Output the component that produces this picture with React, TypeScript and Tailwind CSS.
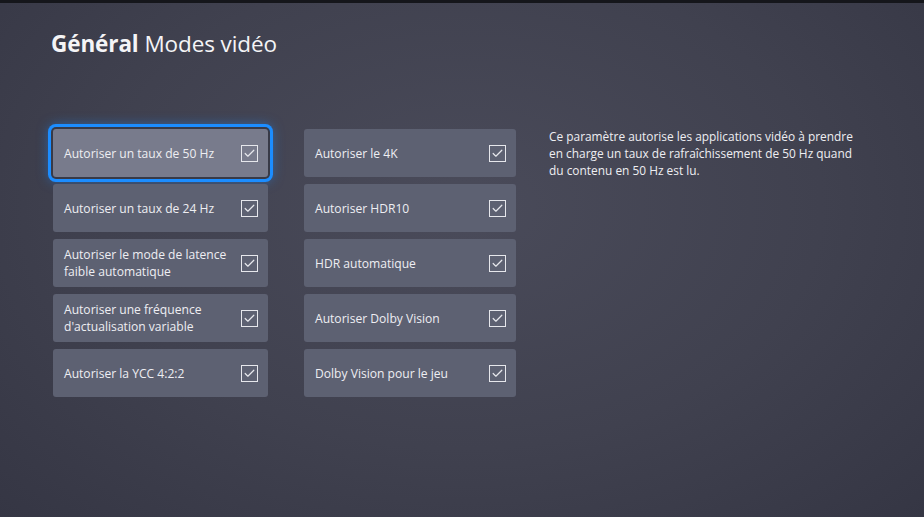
import { Check } from "lucide-react";

const left = [
  "Autoriser un taux de 50 Hz",
  "Autoriser un taux de 24 Hz",
  "Autoriser le mode de latence faible automatique",
  "Autoriser une fréquence d'actualisation variable",
  "Autoriser la YCC 4:2:2",
];

const right = [
  "Autoriser le 4K",
  "Autoriser HDR10",
  "HDR automatique",
  "Autoriser Dolby Vision",
  "Dolby Vision pour le jeu",
];

function Tile({ label, focused }: { label: string; focused?: boolean }) {
  return (
    <div
      className={
        "flex h-[48px] items-center justify-between rounded-[3px] pl-[11px] pr-[10px] " +
        (focused
          ? "bg-[#787b8c] ring-[3px] ring-[#1c8dff] ring-offset-2 ring-offset-[#383a47] shadow-[0_0_12px_4px_rgba(30,140,255,0.5)]"
          : "bg-[#5d6172]")
      }
    >
      <span className="pr-2 text-[12.1px] leading-[17px] text-[#eeeef2]">{label}</span>
      <span className="flex h-[17px] w-[17px] shrink-0 items-center justify-center border-[1.5px] border-[#e6e7ec]">
        <Check className="h-[13px] w-[13px] text-[#e6e7ec]" strokeWidth={2.2} />
      </span>
    </div>
  );
}

export default function App() {
  return (
    <div
      className="h-[517px] w-[924px] overflow-hidden bg-[radial-gradient(ellipse_at_50%_40%,#4a4b5a_0%,#40414f_55%,#353644_100%)] text-white"
      style={{ fontFamily: '"Open Sans", "Noto Sans", sans-serif' }}
    >
      <div className="h-[3px] bg-[#15161b]" />
      <div className="px-[51px] pt-[26px]">
        <h1 className="text-[22.5px] leading-[30px] tracking-[-0.1px] text-[#f4f4f6]">
          <span className="font-bold">Général</span> Modes vidéo
        </h1>
      </div>

      <div className="mt-[70px] flex pl-[53px]">
        <div className="flex w-[215px] flex-col gap-[7px]">
          {left.map((l, i) => (
            <Tile key={l} label={l} focused={i === 0} />
          ))}
        </div>
        <div className="ml-[36px] flex w-[212px] flex-col gap-[7px]">
          {right.map((l) => (
            <Tile key={l} label={l} />
          ))}
        </div>
        <p className="ml-[33px] mt-[-1px] w-[320px] text-[11.9px] leading-[17px] text-[#eeeef2]">
          Ce paramètre autorise les applications vidéo à prendre en charge un taux de rafraîchissement de 50 Hz quand du contenu en 50 Hz est lu.
        </p>
      </div>
    </div>
  );
}
